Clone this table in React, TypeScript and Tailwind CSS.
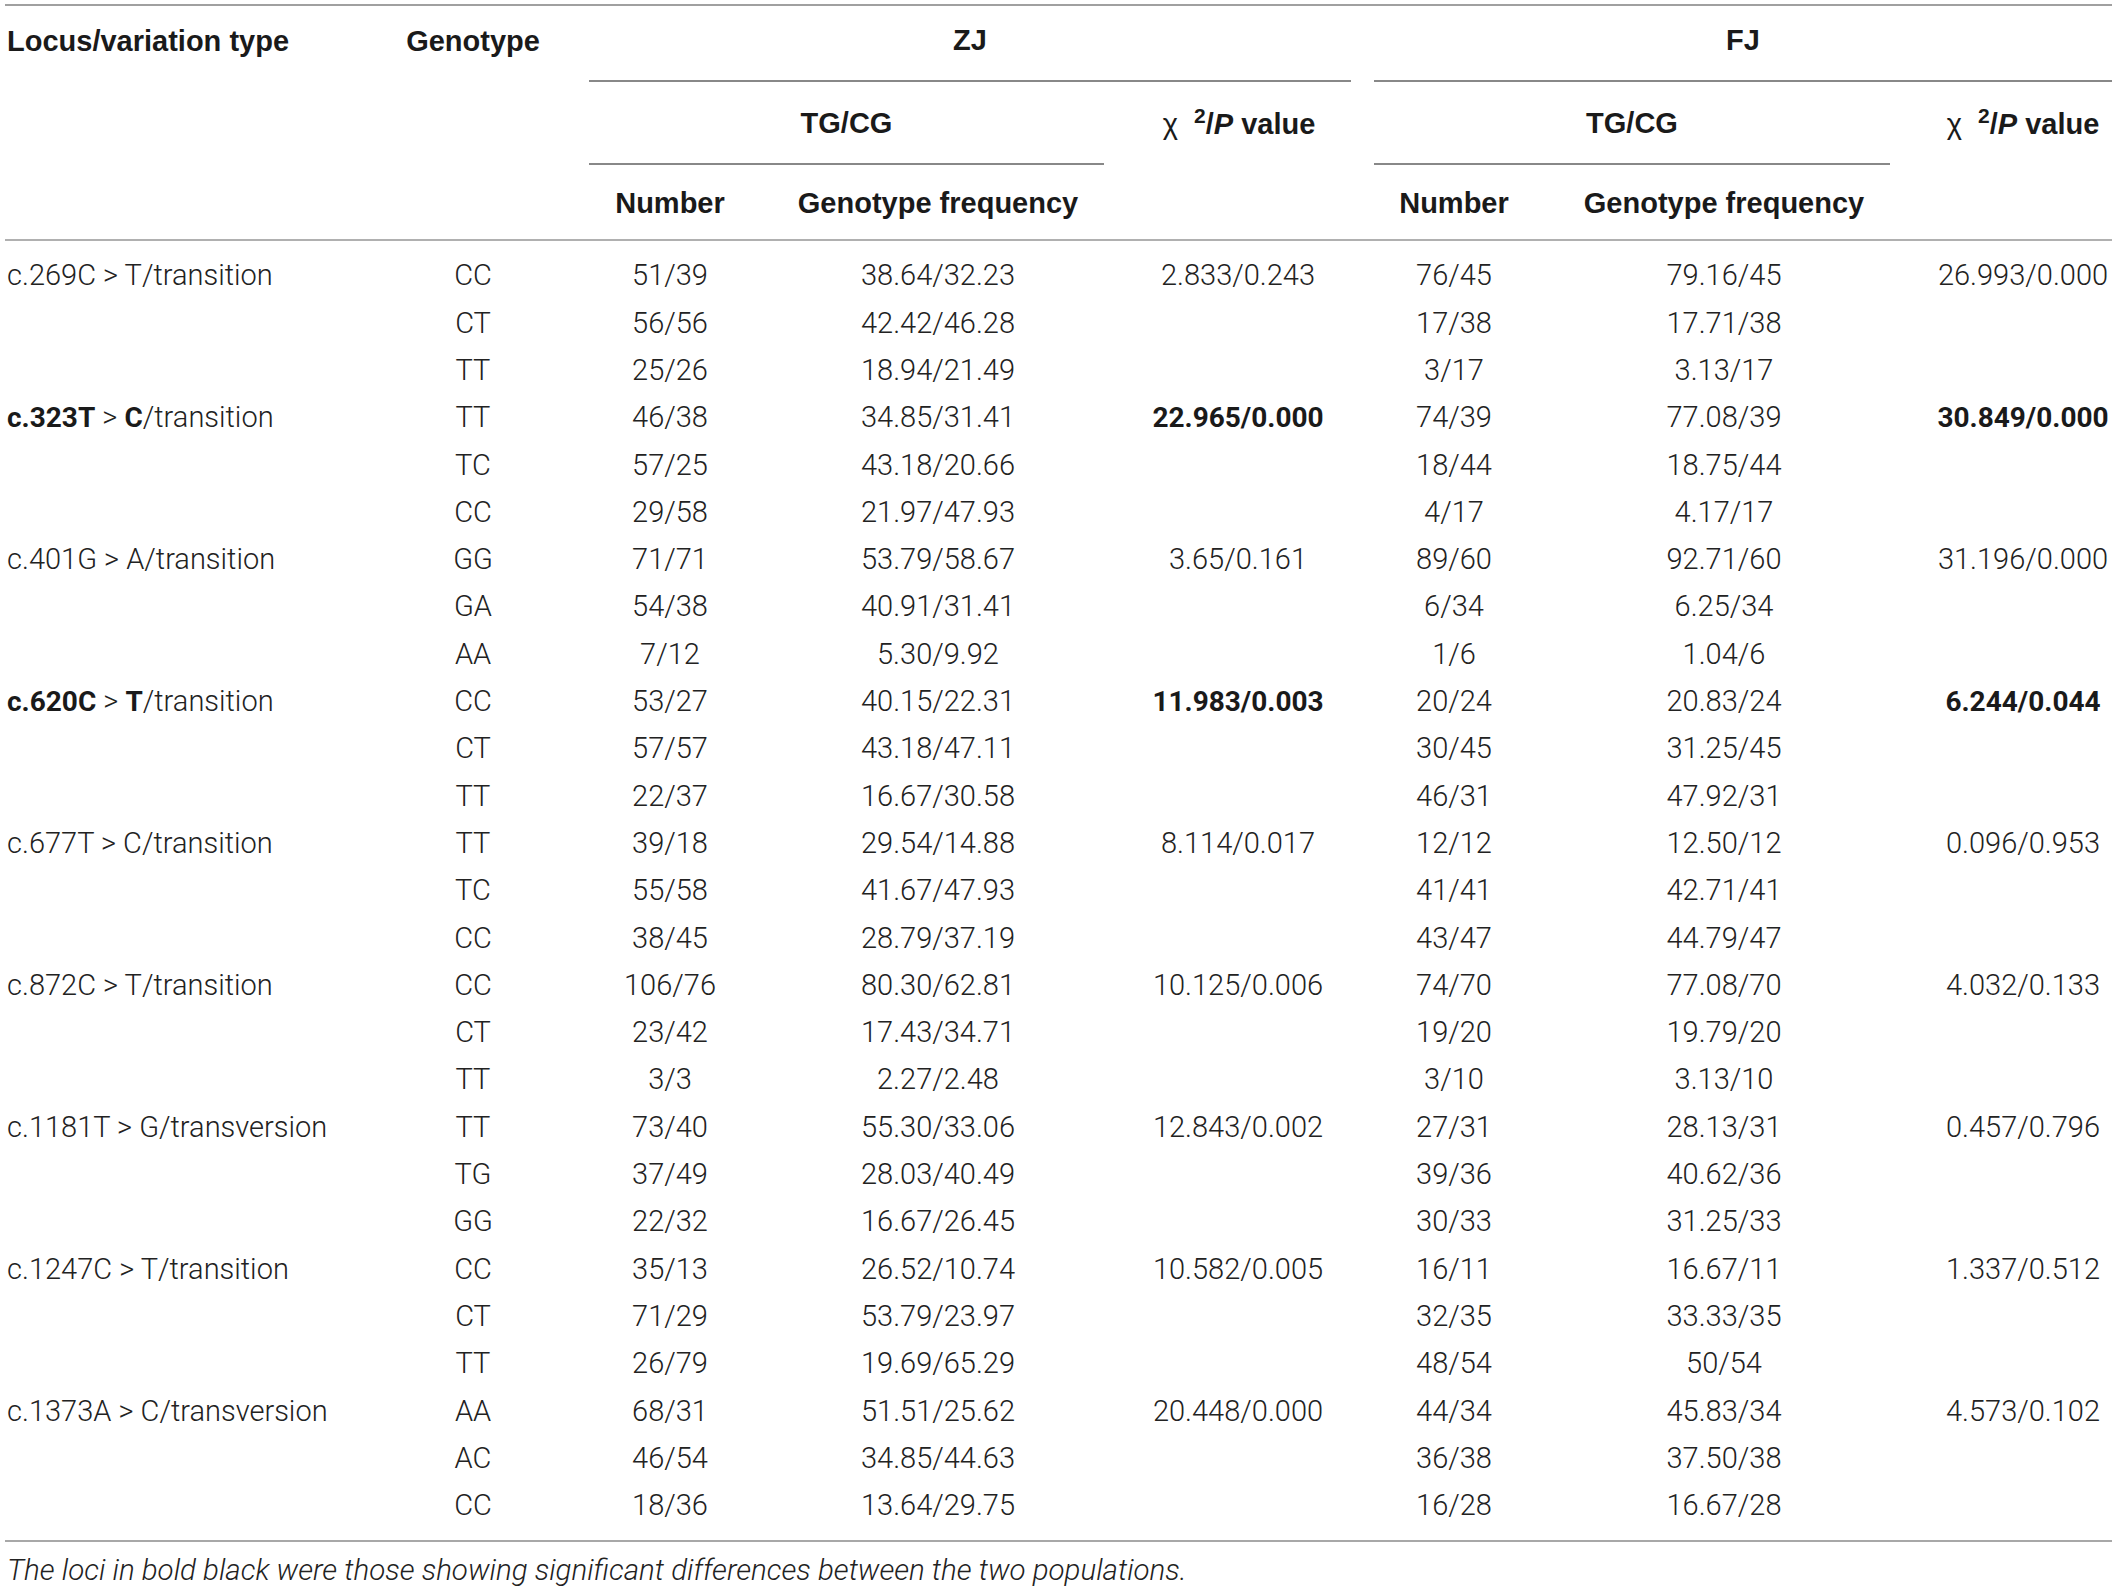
type Row = {
  locus?: [string, string, string];
  bold?: boolean;
  gt: string;
  zn: string;
  zf: string;
  zc?: string;
  fn: string;
  ff: string;
  fc?: string;
};

const rows: Row[] = [
  { locus: ["c.269C", "T", "/transition"], gt: "CC", zn: "51/39", zf: "38.64/32.23", zc: "2.833/0.243", fn: "76/45", ff: "79.16/45", fc: "26.993/0.000" },
  { gt: "CT", zn: "56/56", zf: "42.42/46.28", fn: "17/38", ff: "17.71/38" },
  { gt: "TT", zn: "25/26", zf: "18.94/21.49", fn: "3/17", ff: "3.13/17" },
  { locus: ["c.323T", "C", "/transition"], bold: true, gt: "TT", zn: "46/38", zf: "34.85/31.41", zc: "22.965/0.000", fn: "74/39", ff: "77.08/39", fc: "30.849/0.000" },
  { gt: "TC", zn: "57/25", zf: "43.18/20.66", fn: "18/44", ff: "18.75/44" },
  { gt: "CC", zn: "29/58", zf: "21.97/47.93", fn: "4/17", ff: "4.17/17" },
  { locus: ["c.401G", "A", "/transition"], gt: "GG", zn: "71/71", zf: "53.79/58.67", zc: "3.65/0.161", fn: "89/60", ff: "92.71/60", fc: "31.196/0.000" },
  { gt: "GA", zn: "54/38", zf: "40.91/31.41", fn: "6/34", ff: "6.25/34" },
  { gt: "AA", zn: "7/12", zf: "5.30/9.92", fn: "1/6", ff: "1.04/6" },
  { locus: ["c.620C", "T", "/transition"], bold: true, gt: "CC", zn: "53/27", zf: "40.15/22.31", zc: "11.983/0.003", fn: "20/24", ff: "20.83/24", fc: "6.244/0.044" },
  { gt: "CT", zn: "57/57", zf: "43.18/47.11", fn: "30/45", ff: "31.25/45" },
  { gt: "TT", zn: "22/37", zf: "16.67/30.58", fn: "46/31", ff: "47.92/31" },
  { locus: ["c.677T", "C", "/transition"], gt: "TT", zn: "39/18", zf: "29.54/14.88", zc: "8.114/0.017", fn: "12/12", ff: "12.50/12", fc: "0.096/0.953" },
  { gt: "TC", zn: "55/58", zf: "41.67/47.93", fn: "41/41", ff: "42.71/41" },
  { gt: "CC", zn: "38/45", zf: "28.79/37.19", fn: "43/47", ff: "44.79/47" },
  { locus: ["c.872C", "T", "/transition"], gt: "CC", zn: "106/76", zf: "80.30/62.81", zc: "10.125/0.006", fn: "74/70", ff: "77.08/70", fc: "4.032/0.133" },
  { gt: "CT", zn: "23/42", zf: "17.43/34.71", fn: "19/20", ff: "19.79/20" },
  { gt: "TT", zn: "3/3", zf: "2.27/2.48", fn: "3/10", ff: "3.13/10" },
  { locus: ["c.1181T", "G", "/transversion"], gt: "TT", zn: "73/40", zf: "55.30/33.06", zc: "12.843/0.002", fn: "27/31", ff: "28.13/31", fc: "0.457/0.796" },
  { gt: "TG", zn: "37/49", zf: "28.03/40.49", fn: "39/36", ff: "40.62/36" },
  { gt: "GG", zn: "22/32", zf: "16.67/26.45", fn: "30/33", ff: "31.25/33" },
  { locus: ["c.1247C", "T", "/transition"], gt: "CC", zn: "35/13", zf: "26.52/10.74", zc: "10.582/0.005", fn: "16/11", ff: "16.67/11", fc: "1.337/0.512" },
  { gt: "CT", zn: "71/29", zf: "53.79/23.97", fn: "32/35", ff: "33.33/35" },
  { gt: "TT", zn: "26/79", zf: "19.69/65.29", fn: "48/54", ff: "50/54" },
  { locus: ["c.1373A", "C", "/transversion"], gt: "AA", zn: "68/31", zf: "51.51/25.62", zc: "20.448/0.000", fn: "44/34", ff: "45.83/34", fc: "4.573/0.102" },
  { gt: "AC", zn: "46/54", zf: "34.85/44.63", fn: "36/38", ff: "37.50/38" },
  { gt: "CC", zn: "18/36", zf: "13.64/29.75", fn: "16/28", ff: "16.67/28" },
];

const Chi = () => (
  <span className="whitespace-nowrap">
    <span className="font-normal">χ</span>&nbsp; <sup className="text-[21px]">2</sup>/<i>P</i> value
  </span>
);

const Cell = ({ w, children, bold }: { w: string; children?: React.ReactNode; bold?: boolean }) => (
  <div className={`${w} flex justify-center whitespace-nowrap ${bold ? "font-bold text-[28px] text-[#1a1a1a]" : ""}`}>{children}</div>
);

export default function App() {
  return (
    <div className="w-[2117px] h-[1590px] overflow-hidden bg-white pl-[5px] pt-[4px] font-['Roboto',sans-serif] text-[29px] text-[#222]">
      <div className="w-[2107px] border-t-2 border-[#a0a0a0]">
        {/* header */}
        <div className="flex border-b-2 border-[#b0b0b0] font-['Liberation_Sans',Arial,sans-serif] font-bold text-[29px] text-[#1a1a1a]">
          <div className="w-[395px] pl-[2px] h-[76px] flex items-center pb-[4px]">Locus/variation type</div>
          <div className="w-[146px] h-[76px] flex items-center justify-center pb-[4px]">Genotype</div>
          <div className="flex flex-col">
            <div className="flex h-[78px]">
              <div className="w-[43px]" />
              <div className="w-[762px] h-[76px] border-b-2 border-[#888] flex items-center justify-center pb-[4px]">ZJ</div>
              <div className="w-[23px]" />
              <div className="w-[738px] h-[76px] border-b-2 border-[#888] flex items-center justify-center pb-[4px]">FJ</div>
            </div>
            <div className="flex h-[81px]">
              <div className="w-[43px]" />
              <div className="w-[515px] border-b-2 border-[#888] flex items-center justify-center">TG/CG</div>
              <div className="w-[270px] flex items-center justify-center">
                <Chi />
              </div>
              <div className="w-[516px] border-b-2 border-[#888] flex items-center justify-center">TG/CG</div>
              <div className="w-[44px]" />
              <div className="w-[178px] flex items-center justify-center">
                <Chi />
              </div>
            </div>
            <div className="flex h-[74px] items-center pt-[4px]">
              <Cell w="w-[248px]">Number</Cell>
              <Cell w="w-[288px]">Genotype frequency</Cell>
              <Cell w="w-[312px]" />
              <Cell w="w-[120px]">Number</Cell>
              <Cell w="w-[420px]">Genotype frequency</Cell>
              <Cell w="w-[178px]" />
            </div>
          </div>
        </div>

        {/* body */}
        <div className="pt-[11.5px] pb-[10.5px] border-b-2 border-[#a8a8a8] font-light">
          {rows.map((r, i) => (
            <div key={i} className="flex h-[47.3px] items-center">
              <div className="w-[395px] pl-[2px] whitespace-nowrap">
                {r.locus && (
                  <>
                    <span className={r.bold ? "font-bold text-[28px] text-[#1a1a1a]" : ""}>{r.locus[0]}</span>
                    {" > "}
                    <span className={r.bold ? "font-bold text-[28px] text-[#1a1a1a]" : ""}>{r.locus[1]}</span>
                    {r.locus[2]}
                  </>
                )}
              </div>
              <Cell w="w-[146px]">{r.gt}</Cell>
              <Cell w="w-[248px]">{r.zn}</Cell>
              <Cell w="w-[288px]">{r.zf}</Cell>
              <Cell w="w-[312px]" bold={r.bold}>{r.zc}</Cell>
              <Cell w="w-[120px]">{r.fn}</Cell>
              <Cell w="w-[420px]">{r.ff}</Cell>
              <Cell w="w-[178px]" bold={r.bold}>{r.fc}</Cell>
            </div>
          ))}
        </div>

        <p className="pl-[2px] pt-[10px] leading-[36px] italic font-light text-[29.5px] whitespace-nowrap">
          The loci in bold black were those showing significant differences between the two populations.
        </p>
      </div>
    </div>
  );
}
